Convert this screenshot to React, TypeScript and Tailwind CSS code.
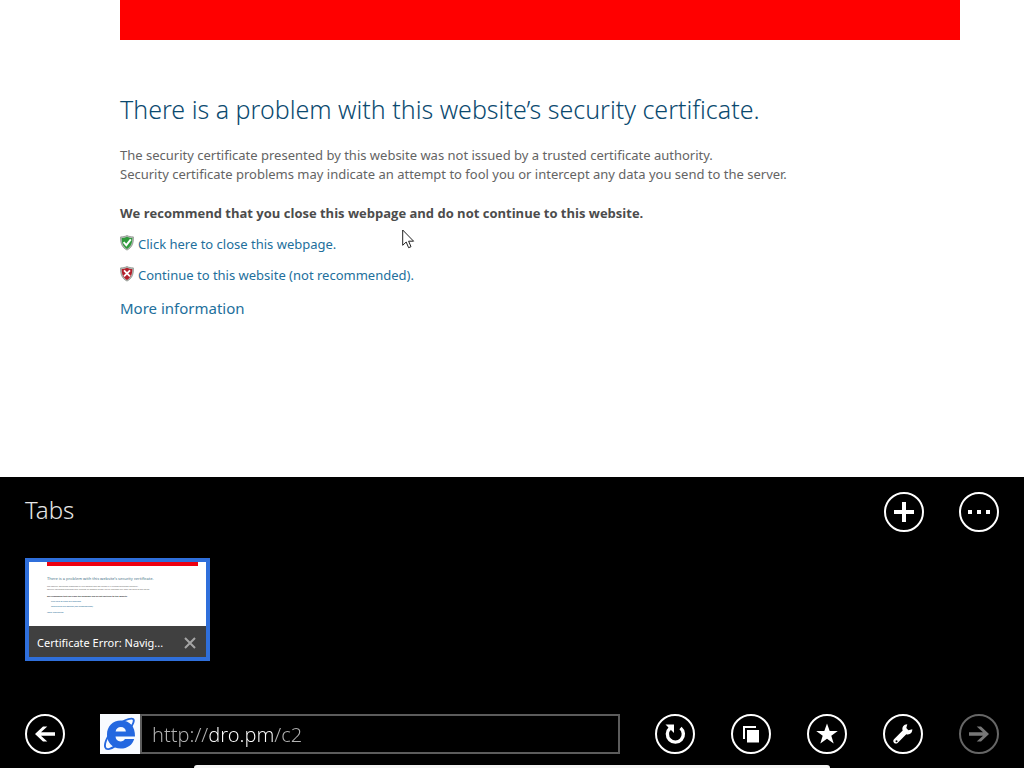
import type { ReactNode } from "react";

interface RoundButtonProps {
  label: string;
  disabled?: boolean;
  children: ReactNode;
}

function RoundButton({ label, disabled = false, children }: RoundButtonProps) {
  return (
    <button
      type="button"
      aria-label={label}
      disabled={disabled}
      className="flex size-10 shrink-0 items-center justify-center rounded-full border-2 border-white text-white disabled:border-[#666] disabled:text-[#777]"
    >
      <svg viewBox="0 0 24 24" className="size-6" fill="currentColor" aria-hidden="true">
        {children}
      </svg>
    </button>
  );
}

interface ShieldProps {
  kind: "safe" | "unsafe";
}

function Shield({ kind }: ShieldProps) {
  const safe = kind === "safe";
  return (
    <svg viewBox="0 0 14 17" className="h-[17px] w-[14px] shrink-0" aria-hidden="true">
      <path d="M7 .5C5 1.500 3 1.900.6 1.900c-.2 6 1 10.400 6.400 13.200 5.400-2.800 6.600-7.200 6.400-13.200C11 1.900 9 1.500 7 .5z" fill="#b9bdb9" stroke="#808680" strokeWidth=".7" />
      <path d="M7 1.700C5.400 2.600 3.800 3 1.700 3.100c0 5 1.300 8.400 5.300 10.900 4-2.500 5.300-5.900 5.300-10.900C10.200 3 8.600 2.600 7 1.700z" fill={safe ? "#2f9a3c" : "#b3202c"} />
      {safe ? (
        <path d="M3.600 7.200l2.700 3 4.500-5.800" fill="none" stroke="#fff" strokeWidth="1.900" />
      ) : (
        <path d="M4 4.400l6 6M10 4.400l-6 6" fill="none" stroke="#fff" strokeWidth="1.800" />
      )}
    </svg>
  );
}

function BrowserLogo() {
  return (
    <svg viewBox="0 0 40 40" className="size-10 shrink-0 bg-[#f8fbff]" aria-hidden="true">
      <path
        d="M35 22.500H15.500c.2 3 2 4.900 5 4.900 2.200 0 3.700-.9 4.400-2.500h9.300C32.500 30.800 27.300 34.500 20.800 34.500 12.500 34.500 7 28.800 7 20.600 7 12.300 12.600 6.500 20.900 6.500 29.700 6.500 35.300 12.600 35 22.500zM15.600 17.500h10.300c-.3-2.700-2.200-4.400-5-4.400-2.900 0-4.800 1.700-5.300 4.400z"
        fill="#2468e0"
      />
      <path
        d="M31.500 12.500C34.500 7.500 34.700 4.700 31.500 4.600 24 4.500 11 14.500 6.500 25.500 3.500 32.500 5 36 9.500 34.900c2-.5 4-1.600 6-3"
        fill="none"
        stroke="#2468e0"
        strokeWidth="1.900"
      />
    </svg>
  );
}

const HEADING = "There is a problem with this website’s security certificate.";
const REASON = "The security certificate presented by this website was not issued by a trusted certificate authority.";
const WARNING = "Security certificate problems may indicate an attempt to fool you or intercept any data you send to the server.";
const ADVICE = "We recommend that you close this webpage and do not continue to this website.";
const CLOSE_PAGE = "Click here to close this webpage.";
const CONTINUE = "Continue to this website (not recommended).";

function CertificatePage() {
  return (
    <main className="relative flex-1 bg-white pr-16 pl-[120px]">
      <div className="h-10 bg-[#ff0000]" />
      <h1 className="mt-[51px] text-[25px] leading-9 font-light text-[#0b4a6f]">{HEADING}</h1>
      <p className="mt-[19px] text-[13px] leading-[19px] text-[#646464]">
        {REASON}
        <br />
        {WARNING}
      </p>
      <p className="mt-5 font-['Open_Sans'] text-[13px] leading-[19px] font-bold text-[#4c4c4c]">{ADVICE}</p>
      <ul className="mt-3 flex flex-col gap-3 text-[13px] leading-[19px] text-[#226f9c]">
        <li className="flex items-start gap-1">
          <Shield kind="safe" />
          <a href="#close">{CLOSE_PAGE}</a>
        </li>
        <li className="flex items-start gap-1">
          <Shield kind="unsafe" />
          <a href="#continue">{CONTINUE}</a>
        </li>
      </ul>
      <a href="#more" className="mt-[11px] inline-block text-[15px] leading-6 text-[#226f9c]">
        More information
      </a>
      <svg viewBox="0 0 13 20" className="absolute top-[229px] left-[402px] h-5 w-[13px]" aria-hidden="true">
        <path d="M.7 1v15.300l3.500-3.300 2.400 5.700 2.400-1-2.400-5.500h5z" fill="#fff" stroke="#222" />
      </svg>
    </main>
  );
}

function TabThumbnail() {
  return (
    <div className="w-[185px] border-4 border-[#2f6fdb]">
      <div className="h-16 overflow-hidden bg-white pr-2 pl-[18px] text-[2px] leading-[4px] whitespace-nowrap text-[#666]" aria-hidden="true">
        <div className="h-1 bg-[#ee0010]" />
        <p className="mt-[10px] text-[4px] leading-[6px] text-[#3f6f85]">{HEADING}</p>
        <p className="mt-[3px] leading-[3px]">{REASON}</p>
        <p className="leading-[3px]">{WARNING}</p>
        <p className="mt-1 font-bold text-[#333]">{ADVICE}</p>
        <p className="mt-px pl-1 text-[#136592]">{CLOSE_PAGE}</p>
        <p className="mt-px pl-1 text-[#136592]">{CONTINUE}</p>
        <p className="mt-[2px] text-[#136592]">More information</p>
      </div>
      <div className="flex h-[31px] items-center justify-between bg-[#404040] pt-[3px] pr-[10px] pl-2">
        <span className="text-[11px] text-white">Certificate Error: Navig...</span>
        <button type="button" aria-label="Close tab" className="text-[#a5a5a5]">
          <svg viewBox="0 0 12 12" className="size-3" aria-hidden="true">
            <path d="M1 1l10 10M11 1L1 11" stroke="currentColor" strokeWidth="2" />
          </svg>
        </button>
      </div>
    </div>
  );
}

function AddressBar() {
  return (
    <form className="flex h-10 w-[520px] shrink" onSubmit={(e) => e.preventDefault()}>
      <BrowserLogo />
      <div className="flex min-w-0 flex-1 border-2 border-[#5c5c5c] bg-black">
        {/* the host name is brighter than the rest of the address */}
        <input
          type="text"
          aria-label="Address"
          defaultValue="http://dro.pm/c2"
          className="w-full bg-[linear-gradient(90deg,#b4b4b4_66px,#ffffff_66px,#ffffff_132px,#b4b4b4_132px)] bg-clip-text pt-[2px] pl-[10px] text-xl font-light text-transparent caret-white outline-none"
        />
      </div>
    </form>
  );
}

function TabsPanel() {
  return (
    <section className="bg-black px-[25px] pt-[15px] text-white">
      <header className="flex items-start justify-between">
        <h2 className="text-2xl leading-9 font-light text-[#e6e6e6]">Tabs</h2>
        <div className="flex gap-[35px]">
          <RoundButton label="New tab">
            <path d="M10 2h4v8h8v4h-8v8h-4v-8H2v-4h8z" />
          </RoundButton>
          <RoundButton label="Tab tools">
            <path d="M1 10h4v4H1zM10 10h4v4h-4zM19 10h4v4h-4z" />
          </RoundButton>
        </div>
      </header>
      <div className="mt-[26px]">
        <TabThumbnail />
      </div>
      <nav className="mt-[53px] flex items-center justify-between">
        <div className="flex min-w-0 gap-[35px]">
          <RoundButton label="Back">
            <path d="M2 12l8-7.500h4.300L8 10.300h14v3.400H8l6.300 5.800H10z" />
          </RoundButton>
          <AddressBar />
        </div>
        <div className="flex gap-9">
          <RoundButton label="Refresh">
            <path d="M7 6.200A8 8 0 1 0 17.500 6" fill="none" stroke="currentColor" strokeWidth="3.400" />
            <path d="M2.500 2.500h8.500V11z" />
          </RoundButton>
          <RoundButton label="Pages">
            <path d="M4 4h13v2H6v11H4z" />
            <path d="M8 8h12v12.500H8z" />
          </RoundButton>
          <RoundButton label="Favorites">
            <path d="M12 1.500l2.700 7.600h8.100l-6.500 4.700 2.400 7.700-6.700-4.700-6.700 4.700 2.400-7.700-6.500-4.700h8.100z" />
          </RoundButton>
          <RoundButton label="Page tools">
            <path
              fillRule="evenodd"
              d="M21.300 7.200l-3.900 1-2.100-2.100 1-3.900c-3.600-.1-5.800 3-4.600 6.400L3 17.300c-2.200 2.400 1.200 5.800 3.600 3.600l8.700-8.700c3.500 1 6.200-1.600 6-5zM5.500 18.200a1 1 0 1 1-1 1 1 1 0 0 1 1-1z"
            />
          </RoundButton>
          <RoundButton label="Forward" disabled>
            <path d="M22 12l-8-7.500H9.700l6.300 5.800H2v3.400h14l-6.300 5.800H14z" />
          </RoundButton>
        </div>
      </nav>
      <div className="mx-[169px] mt-[11px] h-[3px] rounded-t-md bg-[#f5f5f5]" />
    </section>
  );
}

export default function App() {
  return (
    <div className="flex min-h-screen flex-col font-['Noto_Sans','Open_Sans',sans-serif]">
      <CertificatePage />
      <TabsPanel />
    </div>
  );
}
